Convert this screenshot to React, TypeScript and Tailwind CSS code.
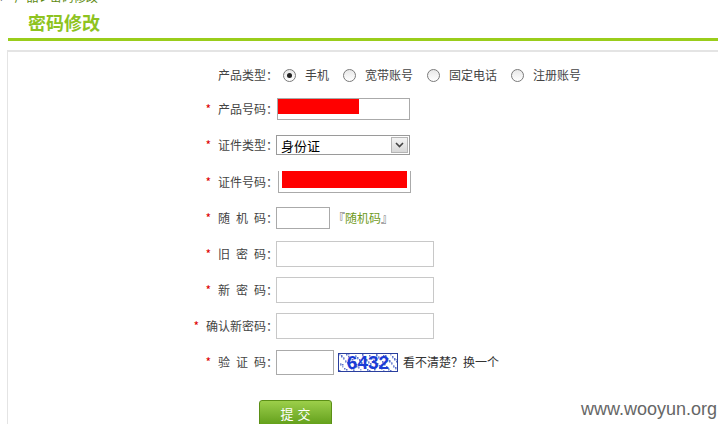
import React from 'react';

const font = { fontFamily: '"Noto Sans CJK SC", "Noto Sans", sans-serif' };

function Label({ chars, star = true }: { chars: string[]; star?: boolean }) {
  return (
    <div className="w-[266px] flex justify-end items-center text-[12px] text-[#444]">
      {star && <span className="text-[#d00] mr-[7px] text-[12px]">*</span>}
      <span className="flex justify-between" style={{ width: Math.max(48, chars.length * 12) }}>
        {chars.map((c, i) => (
          <span key={i}>{c}</span>
        ))}
      </span>
      <span className="w-[8px]">：</span>
    </div>
  );
}

function Radio({ checked, text, first }: { checked?: boolean; text: string; first?: boolean }) {
  return (
    <div className={`flex items-center ${first ? 'ml-[9px]' : 'ml-[14px]'}`}>
      <span className="w-[13px] h-[13px] rounded-full border border-[#7a7a7a] bg-gradient-to-b from-[#e8e8e8] to-white flex items-center justify-center">
        {checked && <span className="w-[5px] h-[5px] rounded-full bg-[#222]" />}
      </span>
      <span className="ml-[9px] text-[12px] text-[#444]">{text}</span>
    </div>
  );
}

function Captcha() {
  const dots = Array.from({ length: 110 }, (_, i) => ({
    x: (i * 37) % 58,
    y: (i * 13 + (i % 7) * 5) % 17,
  }));
  return (
    <div className="relative w-[60px] h-[19px] border border-[#2a3f9e] bg-white overflow-hidden flex items-center justify-center ml-[4px]">
      <svg className="absolute inset-0" width="60" height="19">
        {dots.map((d, i) => (
          <rect key={i} x={d.x} y={d.y} width="1.5" height="1.5" fill={i % 3 ? '#5a70cc' : '#9aa8e0'} />
        ))}
      </svg>
      <span
        className="relative text-[19px] font-black text-[#1a3cd6] leading-none"
        style={{ fontFamily: '"Liberation Sans", Arial, sans-serif' }}
      >
        6432
      </span>
    </div>
  );
}

export default function App() {
  return (
    <div className="relative w-[718px] h-[424px] overflow-hidden bg-white" style={font}>
      <div className="h-[5px] overflow-hidden">
        <div className="-mt-[10px] text-[12px] text-[#333] leading-[14px]">
          ›&nbsp;&nbsp;&nbsp;&nbsp;<span className="text-[#5e8a12]">产品 ▸ 密码修改</span>
        </div>
      </div>
      <div className="h-[33px] pl-[28px] flex items-center">
        <span className="text-[18px] font-bold text-[#8ec31f] leading-none">密码修改</span>
      </div>
      <div className="ml-[8px] h-[3px] bg-[#9acd1b]" />
      <div className="ml-[7px] mt-[9px] border-t-2 border-l border-[#e4e4e4] h-[400px] pt-[6px]">
        <div className="h-[34px] flex items-center">
          <Label chars={['产', '品', '类', '型']} star={false} />
          <Radio checked text="手机" first />
          <Radio text="宽带账号" />
          <Radio text="固定电话" />
          <Radio text="注册账号" />
        </div>

        <div className="h-[34px] flex items-center">
          <Label chars={['产', '品', '号', '码']} />
          <div className="ml-[3px] w-[133px] h-[22px] border border-[#aaa] bg-white">
            <div className="w-[81px] h-[15px] bg-[#ff0000]" />
          </div>
        </div>

        <div className="h-[38px] flex items-center">
          <Label chars={['证', '件', '类', '型']} />
          <div className="ml-[2px] w-[134px] h-[20px] border border-[#9a9a9a] bg-white flex items-center">
            <span className="flex-1 pl-[4px] text-[13px] text-black leading-none">身份证</span>
            <span className="w-[17px] h-[16px] mr-[1px] border border-[#b5b5b5] bg-gradient-to-b from-[#f4f4f4] to-[#d8d8d8] flex items-center justify-center">
              <svg width="9" height="6" viewBox="0 0 9 6">
                <path d="M1 1 L4.5 4.5 L8 1" stroke="#444" strokeWidth="1.6" fill="none" />
              </svg>
            </span>
          </div>
        </div>

        <div className="h-[36px] flex items-center">
          <Label chars={['证', '件', '号', '码']} />
          <div className="ml-[4px] w-[133px] h-[22px] border border-[#aaa] border-t-0 bg-white pl-[3px]">
            <div className="w-[125px] h-[17px] bg-[#ff0000]" />
          </div>
        </div>

        <div className="h-[36px] flex items-center">
          <Label chars={['随', '机', '码']} />
          <div className="ml-[2px] w-[54px] h-[22px] border border-[#aaa] bg-white" />
          <span className="ml-[3px] text-[12px] text-[#666]">
            『<span className="text-[#6f9a22]">随机码</span>』
          </span>
        </div>

        <div className="h-[36px] flex items-center">
          <Label chars={['旧', '密', '码']} />
          <div className="ml-[2px] w-[158px] h-[26px] border border-[#c8c8c8] bg-white" />
        </div>

        <div className="h-[36px] flex items-center">
          <Label chars={['新', '密', '码']} />
          <div className="ml-[2px] w-[158px] h-[26px] border border-[#c8c8c8] bg-white" />
        </div>

        <div className="h-[36px] flex items-center">
          <Label chars={['确', '认', '新', '密', '码']} />
          <div className="ml-[2px] w-[158px] h-[26px] border border-[#c8c8c8] bg-white" />
        </div>

        <div className="h-[36px] flex items-center">
          <Label chars={['验', '证', '码']} />
          <div className="ml-[2px] w-[58px] h-[25px] border border-[#aaa] bg-white" />
          <Captcha />
          <span className="ml-[5px] text-[12px] text-[#333]">看不清楚？换一个</span>
        </div>

        <div className="mt-[20px] ml-[251px]">
          <button className="w-[73px] h-[28px] rounded-[3px] border border-[#5b8f16] bg-gradient-to-b from-[#9ccf4a] to-[#5d9b12] text-white text-[13px] tracking-[4px] pl-[4px]">
            提交
          </button>
        </div>
      </div>
      <div
        className="absolute right-[1px] bottom-[1px] text-[18px] text-[#666]"
        style={{ fontFamily: '"Liberation Sans", Arial, sans-serif' }}
      >
        www.wooyun.org
      </div>
    </div>
  );
}
